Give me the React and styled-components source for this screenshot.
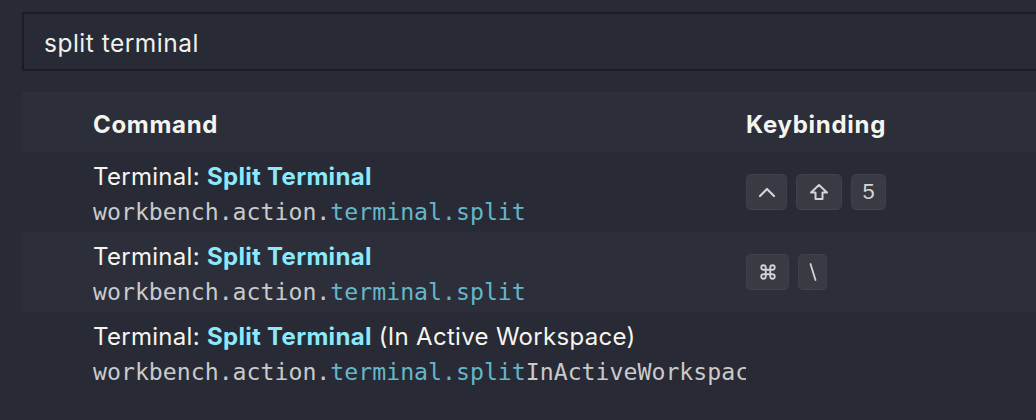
import React from "react";
import styled, { createGlobalStyle } from "styled-components";

const GlobalStyle = createGlobalStyle`
html, body {
  margin: 0;
  padding: 0;
  background-color: #282a36;
}
body {
  font-family: Inter, "Noto Sans", sans-serif;
  overflow: hidden;
}
`;

// page
const Page = styled.div`
width: 1036px;
height: 420px;
background-color: #282a36;
padding: 12px 0 0 22px;
box-sizing: border-box;
overflow: hidden;
`;

// search box
const SearchBox = styled.div`
height: 59px;
width: 1040px;
box-sizing: border-box;
border: 2px solid #1c1d24;
display: flex;
align-items: center;
padding: 3px 0 0 20px;
font-size: 24.5px;
color: #f0f0ea;
letter-spacing: 0.5px;
`;

// table
const Table = styled.div`
margin-top: 21px;
width: 1014px;
display: flex;
flex-direction: column;
`;

const Row = styled.div`
display: grid;
grid-template-columns: 71px 653px 1fr;
align-items: center;
height: ${(p) => (p.$header ? "60px" : "80px")};
background-color: ${(p) => (p.$shade ? "#2c2e3a" : "#282a36")};
`;

const HeadCell = styled.div`
grid-column: ${(p) => p.$col};
font-size: 24px;
font-weight: 700;
color: #f5f5ef;
letter-spacing: 0.7px;
padding-top: 4px;
`;

const CommandCell = styled.div`
grid-column: 2;
display: flex;
flex-direction: column;
gap: 6px;
padding-top: 4px;
overflow: hidden;
white-space: nowrap;
`;

const Title = styled.div`
font-size: 24px;
color: #f5f5ef;
letter-spacing: 0.3px;
line-height: 29px;
`;

const Match = styled.span`
color: #8be9fd;
font-weight: 700;
`;

const CommandId = styled.div`
font-family: "DejaVu Sans Mono", "Liberation Mono", monospace;
font-size: 23.2px;
line-height: 29px;
color: #cacaca;
`;

const IdMatch = styled.span`
color: #65b6ca;
`;

const Keys = styled.div`
grid-column: 3;
display: flex;
gap: 9px;
`;

const Key = styled.div`
height: 36px;
min-width: ${(p) => p.$w}px;
box-sizing: border-box;
display: flex;
align-items: center;
justify-content: center;
background-color: #383a44;
border: 1px solid #3e404a;
border-bottom-color: #42444e;
border-radius: 5px;
color: #d4d4d4;
font-size: 22px;
font-family: "Liberation Sans", Arial, sans-serif;
`;

const Caret = () => (
  <svg width="18" height="12" viewBox="0 0 18 12" fill="none">
    <polyline points="2,10 9,3 16,10" stroke="#d4d4d4" strokeWidth="2.2" strokeLinecap="round" strokeLinejoin="round" />
  </svg>
);

const Shift = () => (
  <svg width="20" height="18" viewBox="0 0 20 18" fill="none">
    <path d="M10 2 L18 9.5 H13.5 V16 H6.5 V9.5 H2 Z" stroke="#d4d4d4" strokeWidth="2" strokeLinejoin="round" />
  </svg>
);

const Cmd = () => (
  <svg width="18" height="18" viewBox="0 0 24 24" fill="none">
    <path
      d="M15 6v12a3 3 0 1 0 3-3H6a3 3 0 1 0 3 3V6a3 3 0 1 0-3 3h12a3 3 0 1 0-3-3"
      stroke="#d4d4d4"
      strokeWidth="2.4"
      strokeLinecap="round"
      strokeLinejoin="round"
    />
  </svg>
);

const Backslash = () => (
  <svg width="10" height="20" viewBox="0 0 10 20" fill="none">
    <line x1="2.5" y1="2" x2="7.5" y2="18" stroke="#d4d4d4" strokeWidth="1.8" strokeLinecap="round" />
  </svg>
);

const rows = [
  {
    suffix: "",
    idTail: "",
    keys: [
      { w: 41, el: <Caret /> },
      { w: 46, el: <Shift /> },
      { w: 35, el: "5" },
    ],
  },
  {
    suffix: "",
    idTail: "",
    keys: [
      { w: 43, el: <Cmd /> },
      { w: 29, el: <Backslash /> },
    ],
  },
  {
    suffix: " (In Active Workspace)",
    idTail: "InActiveWorkspace",
    keys: [],
  },
];

export default function App() {
  return (
    <>
      <GlobalStyle />
      <Page>
        <SearchBox>split terminal</SearchBox>
        <Table>
          <Row $header $shade>
            <HeadCell $col={2}>Command</HeadCell>
            <HeadCell $col={3}>Keybinding</HeadCell>
          </Row>
          {rows.map((r, i) => (
            <Row key={i} $shade={i % 2 === 1}>
              <CommandCell>
                <Title>
                  Terminal: <Match>Split Terminal</Match>
                  {r.suffix}
                </Title>
                <CommandId>
                  workbench.action.<IdMatch>terminal.split</IdMatch>
                  {r.idTail}
                </CommandId>
              </CommandCell>
              <Keys>
                {r.keys.map((k, j) => (
                  <Key key={j} $w={k.w}>
                    {k.el}
                  </Key>
                ))}
              </Keys>
            </Row>
          ))}
        </Table>
      </Page>
    </>
  );
}
